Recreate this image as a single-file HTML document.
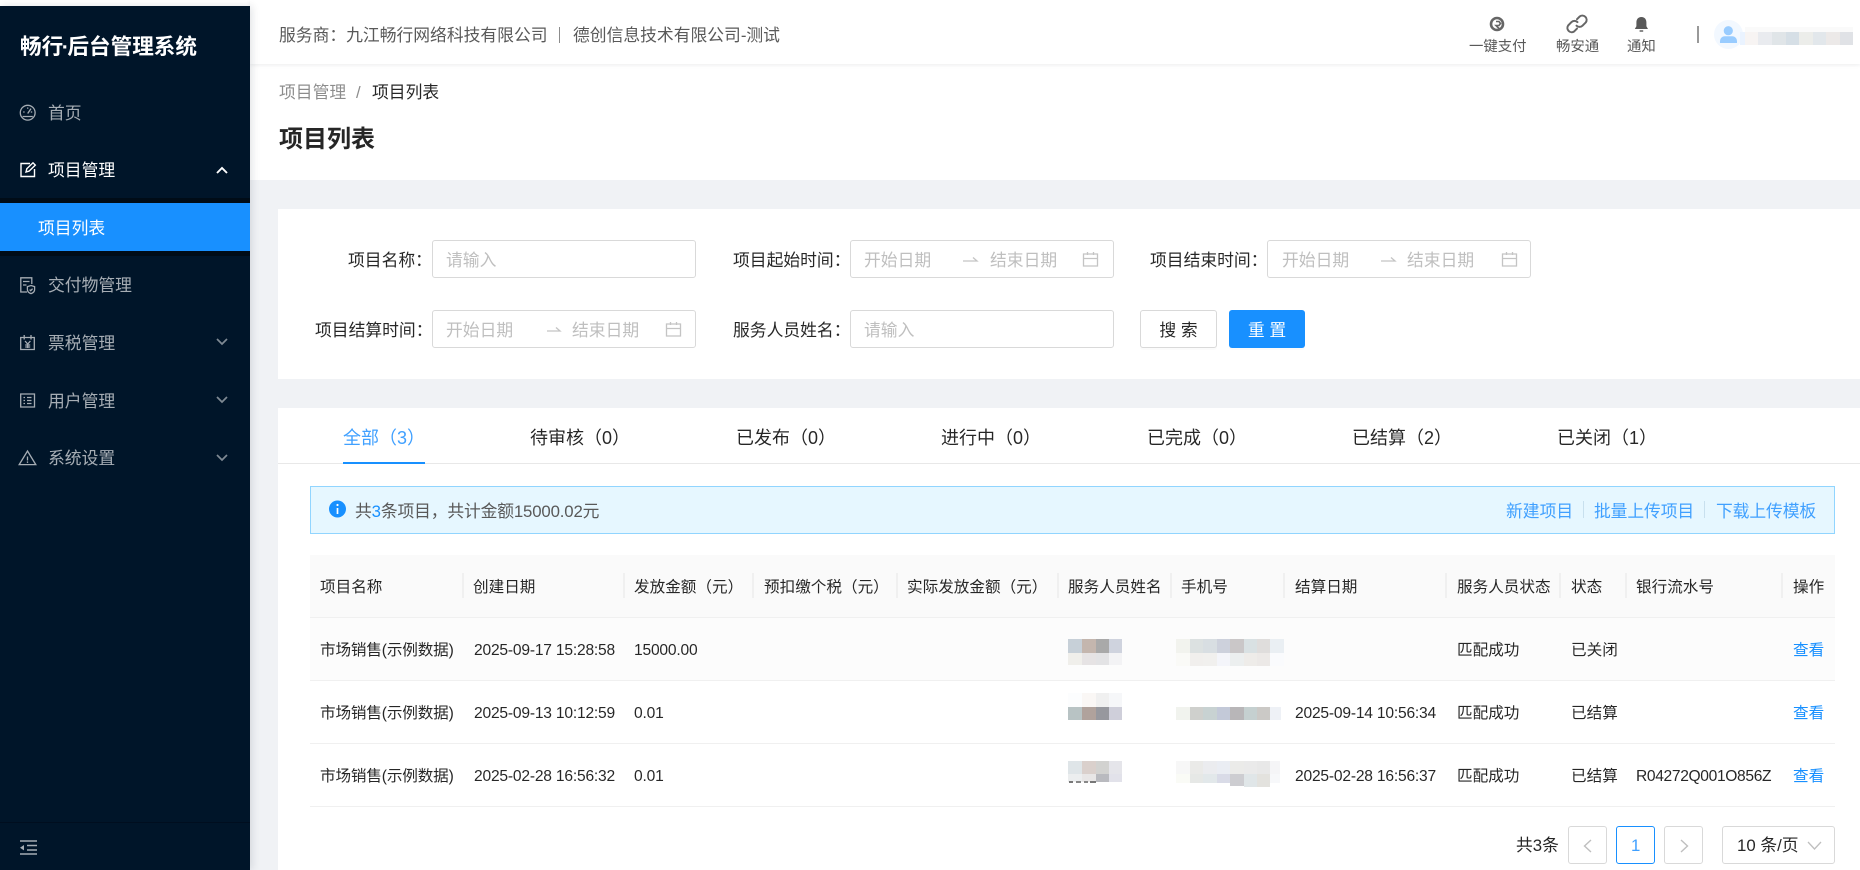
<!DOCTYPE html>
<html lang="zh-CN">
<head>
<meta charset="utf-8">
<title>项目列表</title>
<style>
html,body{margin:0;padding:0;width:1860px;height:870px;overflow:hidden;background:#fff}
body{position:relative;font-family:"Liberation Sans","Noto Sans CJK SC",sans-serif;color:rgba(0,0,0,.85);text-spacing-trim:space-all}
.b{position:absolute;box-sizing:border-box}
.t{position:absolute;white-space:nowrap;line-height:24px;font-size:16.8px;margin-top:1px}
.s{font-size:15.6px}
.m{color:rgba(255,255,255,.65)}
.h{color:#595959}
.p{color:#bfbfbf}
.l{color:#1890ff}
.n{font-size:15.6px;letter-spacing:-.2px}
.c{letter-spacing:-.15px}
.i{border:1px solid #d9d9d9;border-radius:3px;background:#fff;height:38px}
.sep{position:absolute;width:2px;height:25px;top:573px;background:#f0f0f0}
.btn{display:flex;align-items:center;justify-content:center;font-size:16.8px;border-radius:3px;height:38px;top:310px;box-shadow:0 2px 0 rgba(0,0,0,.015)}
.pg{border:1px solid #d9d9d9;border-radius:3px;height:38px;top:826px;background:#fff}
</style>
</head>
<body>
<!-- background panels -->
<div class="b" style="left:250px;top:0;width:1610px;height:870px;background:#f0f2f5"></div>
<div class="b" style="left:250px;top:64px;width:1610px;height:116px;background:#fff"></div>
<div class="b" style="left:250px;top:0;width:1610px;height:64px;background:#fff;box-shadow:0 1px 4px rgba(0,21,41,.08)"></div>
<div class="b" style="left:278px;top:209px;width:1582px;height:170px;background:#fff"></div>
<div class="b" style="left:278px;top:408px;width:1582px;height:462px;background:#fff"></div>

<!-- sidebar -->
<div class="b" style="left:0;top:6px;width:250px;height:864px;background:#001529;box-shadow:2px 0 8px rgba(0,21,41,.12)"></div>
<div class="b" style="left:0;top:198px;width:250px;height:58px;background:#000c17"></div>
<div class="b" style="left:0;top:203px;width:250px;height:48px;background:#1890ff"></div>
<div class="b" style="left:0;top:822px;width:250px;height:1px;background:#000e1f"></div>
<div class="t" style="left:20px;top:34px;font-size:21.6px;font-weight:700;color:#fff">畅行<span style="margin:0 -1.5px">·</span>后台管理系统</div>
<div class="t m" style="left:48px;top:101px">首页</div>
<div class="t" style="left:48px;top:158px;color:#fff">项目管理</div>
<div class="t" style="left:38px;top:216px;color:#fff">项目列表</div>
<div class="t m" style="left:48px;top:273px">交付物管理</div>
<div class="t m" style="left:48px;top:331px">票税管理</div>
<div class="t m" style="left:48px;top:389px">用户管理</div>
<div class="t m" style="left:48px;top:446px">系统设置</div>

<!-- header -->
<div class="t h" style="left:279px;top:23px">服务商：九江畅行网络科技有限公司</div>
<div class="b" style="left:559px;top:27px;width:1px;height:16px;background:#8c8c8c"></div>
<div class="t h" style="left:573px;top:23px">德创信息技术有限公司-测试</div>
<div class="t h" style="left:1469px;top:34px;font-size:14.4px">一键支付</div>
<div class="t h" style="left:1556px;top:34px;font-size:14.4px">畅安通</div>
<div class="t h" style="left:1627px;top:34px;font-size:14.4px">通知</div>
<div class="b" style="left:1697px;top:26px;width:2px;height:17px;background:#999"></div>

<!-- breadcrumb -->
<div class="t" style="left:279px;top:80px;color:rgba(0,0,0,.45)">项目管理</div>
<div class="t" style="left:356px;top:80px;color:rgba(0,0,0,.45)">/</div>
<div class="t" style="left:372px;top:80px">项目列表</div>
<div class="t" style="left:279px;top:127px;font-size:24px;font-weight:700">项目列表</div>

<!-- filter -->
<div class="t" style="left:348px;top:248px">项目名称：</div>
<div class="b i" style="left:432px;top:240px;width:264px"></div>
<div class="t p" style="left:446px;top:248px">请输入</div>
<div class="t" style="left:733px;top:248px">项目起始时间：</div>
<div class="b i" style="left:850px;top:240px;width:264px"></div>
<div class="t p" style="left:864px;top:248px">开始日期</div>
<div class="t p" style="left:990px;top:248px">结束日期</div>
<div class="t" style="left:1150px;top:248px">项目结束时间：</div>
<div class="b i" style="left:1267px;top:240px;width:264px"></div>
<div class="t p" style="left:1282px;top:248px">开始日期</div>
<div class="t p" style="left:1407px;top:248px">结束日期</div>
<div class="t" style="left:315px;top:318px">项目结算时间：</div>
<div class="b i" style="left:432px;top:310px;width:264px"></div>
<div class="t p" style="left:446px;top:318px">开始日期</div>
<div class="t p" style="left:572px;top:318px">结束日期</div>
<div class="t" style="left:733px;top:318px">服务人员姓名：</div>
<div class="b i" style="left:850px;top:310px;width:264px"></div>
<div class="t p" style="left:864px;top:318px">请输入</div>
<div class="b btn" style="left:1140px;width:77px;background:#fff;border:1px solid #d9d9d9">搜 索</div>
<div class="b btn" style="left:1229px;width:76px;background:#1890ff;color:#fff">重 置</div>

<!-- tabs -->
<div class="t l" style="left:343px;top:425px;font-size:18px;color:#40a0ff">全部（3）</div>
<div class="t" style="left:530px;top:425px;font-size:18px">待审核（0）</div>
<div class="t" style="left:736px;top:425px;font-size:18px">已发布（0）</div>
<div class="t" style="left:941px;top:425px;font-size:18px">进行中（0）</div>
<div class="t" style="left:1147px;top:425px;font-size:18px">已完成（0）</div>
<div class="t" style="left:1352px;top:425px;font-size:18px">已结算（2）</div>
<div class="t" style="left:1557px;top:425px;font-size:18px">已关闭（1）</div>
<div class="b" style="left:278px;top:463px;width:1582px;height:1px;background:#e8e8e8"></div>
<div class="b" style="left:343px;top:462px;width:82px;height:2px;background:#1890ff"></div>

<!-- alert -->
<div class="b" style="left:310px;top:486px;width:1525px;height:48px;background:#e6f7ff;border:1px solid #91d5ff"></div>
<div class="t h" style="left:355px;top:499px;letter-spacing:-.15px">共<span class="l">3</span>条项目，共计金额15000.02元</div>
<div class="t l" style="left:1506px;top:499px;color:#40a0ff">新建项目</div>
<div class="b" style="left:1583px;top:501px;width:1px;height:17px;background:#c8e0ee"></div>
<div class="t l" style="left:1594px;top:499px;color:#40a0ff;letter-spacing:-.1px">批量上传项目</div>
<div class="b" style="left:1704px;top:501px;width:1px;height:17px;background:#c8e0ee"></div>
<div class="t l" style="left:1716px;top:499px;color:#40a0ff;letter-spacing:-.1px">下载上传模板</div>

<!-- table -->
<div class="b" style="left:310px;top:555px;width:1525px;height:62px;background:#fafafa"></div>
<div class="b" style="left:310px;top:618px;width:1525px;height:62px;background:#fcfcfc"></div>
<div class="b" style="left:310px;top:617px;width:1525px;height:1px;background:#f0f0f0"></div>
<div class="b" style="left:310px;top:680px;width:1525px;height:1px;background:#f0f0f0"></div>
<div class="b" style="left:310px;top:743px;width:1525px;height:1px;background:#f0f0f0"></div>
<div class="b" style="left:310px;top:806px;width:1525px;height:1px;background:#f0f0f0"></div>
<div class="sep" style="left:462px"></div><div class="sep" style="left:623px"></div><div class="sep" style="left:752px"></div><div class="sep" style="left:896px"></div><div class="sep" style="left:1057px"></div><div class="sep" style="left:1170px"></div><div class="sep" style="left:1283px"></div><div class="sep" style="left:1445px"></div><div class="sep" style="left:1559px"></div><div class="sep" style="left:1625px"></div><div class="sep" style="left:1781px"></div>
<div class="t s" style="left:320px;top:575px">项目名称</div>
<div class="t s" style="left:473px;top:575px">创建日期</div>
<div class="t s" style="left:634px;top:575px">发放金额（元）</div>
<div class="t s" style="left:764px;top:575px">预扣缴个税（元）</div>
<div class="t s" style="left:907px;top:575px">实际发放金额（元）</div>
<div class="t s" style="left:1068px;top:575px">服务人员姓名</div>
<div class="t s" style="left:1181px;top:575px">手机号</div>
<div class="t s" style="left:1295px;top:575px">结算日期</div>
<div class="t s" style="left:1457px;top:575px">服务人员状态</div>
<div class="t s" style="left:1571px;top:575px">状态</div>
<div class="t s" style="left:1636px;top:575px">银行流水号</div>
<div class="t s" style="left:1793px;top:575px">操作</div>

<div class="t s c" style="left:320px;top:638px">市场销售(示例数据)</div>
<div class="t n" style="left:474px;top:638px">2025-09-17 15:28:58</div>
<div class="t n" style="left:634px;top:638px">15000.00</div>
<div class="t s" style="left:1457px;top:638px">匹配成功</div>
<div class="t s" style="left:1571px;top:638px">已关闭</div>
<div class="t s l" style="left:1793px;top:638px">查看</div>

<div class="t s c" style="left:320px;top:701px">市场销售(示例数据)</div>
<div class="t n" style="left:474px;top:701px">2025-09-13 10:12:59</div>
<div class="t n" style="left:634px;top:701px">0.01</div>
<div class="t n" style="left:1295px;top:701px">2025-09-14 10:56:34</div>
<div class="t s" style="left:1457px;top:701px">匹配成功</div>
<div class="t s" style="left:1571px;top:701px">已结算</div>
<div class="t s l" style="left:1793px;top:701px">查看</div>

<div class="t s c" style="left:320px;top:764px">市场销售(示例数据)</div>
<div class="t n" style="left:474px;top:764px">2025-02-28 16:56:32</div>
<div class="t n" style="left:634px;top:764px">0.01</div>
<div class="t n" style="left:1295px;top:764px">2025-02-28 16:56:37</div>
<div class="t s" style="left:1457px;top:764px">匹配成功</div>
<div class="t s" style="left:1571px;top:764px">已结算</div>
<div class="t n" style="left:1636px;top:764px;letter-spacing:-.35px">R04272Q001O856Z</div>
<div class="t s l" style="left:1793px;top:764px">查看</div>

<!-- pagination -->
<div class="t" style="left:1516px;top:833px">共3条</div>
<div class="b pg" style="left:1568px;width:39px"></div>
<div class="b pg" style="left:1616px;width:39px;border-color:#1890ff"></div>
<div class="t l" style="left:1631px;top:833px;color:#40a0ff">1</div>
<div class="b pg" style="left:1664px;width:39px"></div>
<div class="b pg" style="left:1722px;width:113px"></div>
<div class="t" style="left:1737px;top:833px">10 条/页</div>

<!-- icons and masked regions -->
<svg class="b" style="left:0;top:0" width="1860" height="870" viewBox="0 0 1860 870" fill="none">
 <g stroke="#a6adb4" stroke-width="1.3">
  <circle cx="27.7" cy="112.7" r="7.4"/><path d="M27.7 113.5L31 108.6M22.6 116.5h10.2M23.2 112h1.4M30.8 112h1.4M27.7 107.5v1.2"/>
  <path d="M31.8 284V277.8H20.8V292H27M23 281.5H29.5M23 285H26.5"/>
  <path d="M31 285.5l3.6 1.1v3q0 2.8-3.6 4q-3.6-1.2-3.6-4v-3zM29.6 289.6l1.1 1.1 1.9-2"/>
  <path d="M20.7 337.5H34.3V349.5H20.7ZM24.2 335V339.5M31 335V339.5M25 341l2.7 3 2.7-3M27.7 344V348M25.2 345h5M25.2 347h5"/>
  <path d="M20.7 394H34.5V407H20.7ZM23.5 397.5h1.5M27 397.5h4.5M23.5 400.5h1.5M27 400.5h4.5M23.5 403.5h1.5M27 403.5h4.5"/>
  <path d="M27.5 451L35.8 464.6H19.2ZM27.5 456.5v4"/>
  <path d="M27.5 461.4v1.5"/>
  <path stroke-width="1.5" d="M20 841H37M27 845.5H37M27 850H37M20 854H37"/>
 </g>
 <path stroke="#7f8a94" stroke-width="1.7" d="M217 339l5 5 5-5M217 397l5 5 5-5M217 455l5 5 5-5"/>
 <path d="M20 847.7L24 845V850.4Z" fill="#a6adb4"/>
 <g stroke="#fff" stroke-width="1.4">
  <path d="M30 163.5H21V176.5H34.5V169"/><path d="M26 172l.8-3.2 6.2-6 2.3 2.3-6.2 6z"/>
  <path stroke-width="1.9" d="M217 173l5-5 5 5"/>
 </g>
 <!-- header icons -->
 <circle cx="1497" cy="24" r="6" stroke="#666" stroke-width="2.6"/>
 <path d="M1496 21.5h3l1.5 2-1.5 2h-3l3.5 3.5" stroke="#666" stroke-width="1.6"/>
 <g stroke="#666" stroke-width="2" stroke-linecap="round">
  <path d="M1577 19.2l2.8-2.8a4.3 4.3 0 0 1 6 6l-3.3 3.3a4.3 4.3 0 0 1-6 0"/>
  <path d="M1577 28.6l-2.8 2.8a4.3 4.3 0 0 1-6-6l3.3-3.3a4.3 4.3 0 0 1 6 0"/>
 </g>
 <path d="M1641.4 17c-3.5 0-5 2.6-5 5.5v3.7l-1.6 2.8h13.2l-1.6-2.8v-3.7c0-2.9-1.5-5.5-5-5.5z" fill="#595959"/>
 <path d="M1639.6 31h3.6" stroke="#595959" stroke-width="1.4"/>
 <circle cx="1728.5" cy="34.5" r="14.5" fill="#f2f8ff"/>
 <circle cx="1728.3" cy="30.7" r="4.6" fill="#99ccff"/>
 <path d="M1720 43q-.5-6.5 5-6.8h7q5.500 .3 5 6.800z" fill="#99ccff"/>
 <!-- range icons -->
 <g stroke="#c4c4c4" stroke-width="1.3">
  <path d="M1083.500 254H1097.500V266H1083.500ZM1083.500 258.500H1097.500M1087.500 252V255M1093.500 252V255"/>
  <path d="M1502.500 254H1516.500V266H1502.500ZM1502.500 258.500H1516.500M1506.500 252V255M1512.500 252V255"/>
  <path d="M666.500 324H680.500V336H666.500ZM666.500 328.500H680.500M670.500 322V325M676.500 322V325"/>
  <path d="M963 261H977L973 257.500M1381 261H1395L1391 257.500M547 331H560L556 327.500"/>
 </g>
 <!-- alert icon -->
 <circle cx="337.500" cy="509" r="8.500" fill="#1890ff"/>
 <path d="M337.500 508V514" stroke="#fff" stroke-width="1.700"/><circle cx="337.500" cy="505" r="1.100" fill="#fff"/>
 <!-- pagination chevrons -->
 <path d="M1591 840l-6.500 6 6.500 6M1681 840l6.500 6-6.500 6" stroke="#bfbfbf" stroke-width="1.400"/>
 <path d="M1808 842l6.500 7 6.500-7" stroke="#bfbfbf" stroke-width="1.300"/>
 <!-- masked user name in the header -->
 <g shape-rendering="crispEdges">
  <rect x="1740" y="32" width="5" height="13" fill="#eaf3ff"/>
  <rect x="1745" y="27" width="108" height="5" fill="#fafafa"/>
  <rect x="1745" y="32" width="13" height="13" fill="#f7f4f3"/><rect x="1758" y="32" width="14" height="13" fill="#e9ebef"/><rect x="1772" y="32" width="14" height="13" fill="#e0e5e8"/><rect x="1786" y="32" width="13" height="13" fill="#d6dfe6"/><rect x="1799" y="32" width="14" height="13" fill="#ecedea"/><rect x="1813" y="32" width="13" height="13" fill="#e2e7eb"/><rect x="1826" y="32" width="14" height="13" fill="#ece9e8"/><rect x="1840" y="32" width="13" height="13" fill="#e0e2e6"/>
  <!-- masked names -->
  <rect x="1068" y="639" width="14" height="14" fill="#c7d0d8"/><rect x="1082" y="639" width="14" height="14" fill="#c4b6ae"/><rect x="1096" y="639" width="13" height="14" fill="#a9a9a9"/><rect x="1109" y="639" width="13" height="14" fill="#cfd3de"/>
  <rect x="1068" y="653" width="14" height="12" fill="#f0efeb"/><rect x="1082" y="653" width="14" height="12" fill="#e6e3e4"/><rect x="1096" y="653" width="13" height="12" fill="#e3e3e5"/><rect x="1109" y="653" width="13" height="12" fill="#f3f3f5"/>
  <rect x="1068" y="693" width="14" height="14" fill="#fcfdfe"/><rect x="1082" y="693" width="14" height="14" fill="#faf7f5"/><rect x="1096" y="693" width="13" height="14" fill="#f0f0f0"/><rect x="1109" y="693" width="13" height="14" fill="#f6f7f9"/>
  <rect x="1068" y="707" width="14" height="13" fill="#b8c3c4"/><rect x="1082" y="707" width="14" height="13" fill="#b0a29c"/><rect x="1096" y="707" width="13" height="13" fill="#97989e"/><rect x="1109" y="707" width="13" height="13" fill="#cfcfda"/>
  <rect x="1068" y="761" width="14" height="13" fill="#dfe5e8"/><rect x="1082" y="761" width="14" height="13" fill="#dad0cc"/><rect x="1096" y="761" width="13" height="13" fill="#d2d2d0"/><rect x="1109" y="761" width="13" height="13" fill="#e5e5ea"/>
  <rect x="1068" y="774" width="14" height="8" fill="#eceeef"/><rect x="1082" y="774" width="14" height="8" fill="#e8e6e6"/><rect x="1096" y="774" width="13" height="8" fill="#b9babf"/><rect x="1109" y="774" width="13" height="8" fill="#e2e2ea"/>
  <rect x="1069" y="781" width="4" height="2" fill="#777"/><rect x="1076" y="781" width="5" height="2" fill="#888"/><rect x="1084" y="781" width="4" height="2" fill="#888"/><rect x="1090" y="781" width="6" height="2" fill="#777"/>
  <!-- masked phones -->
  <rect x="1176" y="639" width="14" height="14" fill="#f2f3ee"/><rect x="1190" y="639" width="13" height="14" fill="#dce1e1"/><rect x="1203" y="639" width="14" height="14" fill="#d8dee2"/><rect x="1217" y="639" width="13" height="14" fill="#cdd1dc"/><rect x="1230" y="639" width="14" height="14" fill="#cac7c8"/><rect x="1244" y="639" width="13" height="14" fill="#d9e1e3"/><rect x="1257" y="639" width="13" height="14" fill="#dfdddc"/><rect x="1270" y="639" width="14" height="14" fill="#eaeff3"/>
  <rect x="1176" y="653" width="14" height="13" fill="#fafaf7"/><rect x="1190" y="653" width="13" height="13" fill="#f1efed"/><rect x="1203" y="653" width="14" height="13" fill="#f1f0ee"/><rect x="1217" y="653" width="13" height="13" fill="#f4f5fa"/><rect x="1230" y="653" width="14" height="13" fill="#ecefef"/><rect x="1244" y="653" width="13" height="13" fill="#eeece9"/><rect x="1257" y="653" width="13" height="13" fill="#ece9e7"/><rect x="1270" y="653" width="14" height="13" fill="#fafbfd"/>
  <rect x="1176" y="707" width="14" height="13" fill="#f1f3ee"/><rect x="1190" y="707" width="13" height="13" fill="#cfd0cd"/><rect x="1203" y="707" width="14" height="13" fill="#c8d2d2"/><rect x="1217" y="707" width="13" height="13" fill="#c3c9d8"/><rect x="1230" y="707" width="14" height="13" fill="#b8b6b8"/><rect x="1244" y="707" width="13" height="13" fill="#c5d0d0"/><rect x="1257" y="707" width="13" height="13" fill="#cbc9c6"/><rect x="1270" y="707" width="11" height="13" fill="#eef1f6"/>
  <rect x="1176" y="761" width="14" height="13" fill="#f7f7f7"/><rect x="1190" y="761" width="13" height="13" fill="#eaeae8"/><rect x="1203" y="761" width="14" height="13" fill="#ebecef"/><rect x="1217" y="761" width="13" height="13" fill="#eaedf3"/><rect x="1230" y="761" width="14" height="13" fill="#ebebe9"/><rect x="1244" y="761" width="13" height="13" fill="#eaeaea"/><rect x="1257" y="761" width="13" height="13" fill="#e8e8e8"/><rect x="1270" y="761" width="10" height="13" fill="#f5f5f7"/>
  <rect x="1176" y="774" width="14" height="9" fill="#fafbf6"/><rect x="1190" y="774" width="13" height="9" fill="#e6e8e6"/><rect x="1203" y="774" width="14" height="9" fill="#e2e8ea"/><rect x="1217" y="774" width="13" height="9" fill="#d9dbe7"/><rect x="1230" y="774" width="14" height="12" fill="#cdcdd1"/><rect x="1244" y="774" width="13" height="13" fill="#e0e6e8"/><rect x="1257" y="774" width="13" height="13" fill="#e3e2de"/><rect x="1270" y="774" width="10" height="9" fill="#f7f8fa"/>
 </g>
</svg>
</body>
</html>
